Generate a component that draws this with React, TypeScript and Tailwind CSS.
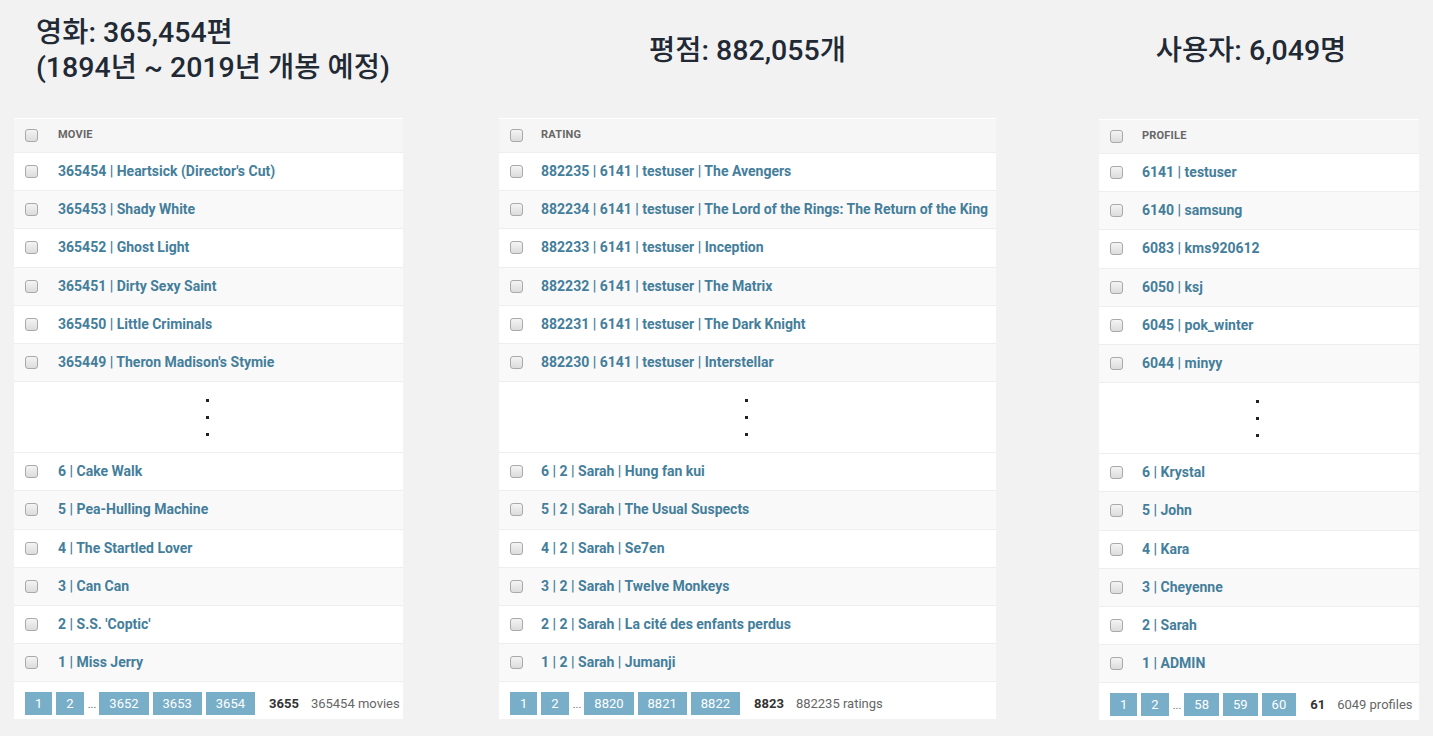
import React from "react";

type Panel = {
  header: string;
  top: string[];
  bottom: string[];
  pages: string[];
  current: string;
  total: string;
  textPad: string;
};

const movies: Panel = {
  header: "MOVIE",
  top: [
    "365454 | Heartsick (Director's Cut)",
    "365453 | Shady White",
    "365452 | Ghost Light",
    "365451 | Dirty Sexy Saint",
    "365450 | Little Criminals",
    "365449 | Theron Madison's Stymie",
  ],
  bottom: [
    "6 | Cake Walk",
    "5 | Pea-Hulling Machine",
    "4 | The Startled Lover",
    "3 | Can Can",
    "2 | S.S. 'Coptic'",
    "1 | Miss Jerry",
  ],
  pages: ["3652", "3653", "3654"],
  current: "3655",
  total: "365454 movies",
  textPad: "w-[44px]",
};

const ratings: Panel = {
  header: "RATING",
  top: [
    "882235 | 6141 | testuser | The Avengers",
    "882234 | 6141 | testuser | The Lord of the Rings: The Return of the King",
    "882233 | 6141 | testuser | Inception",
    "882232 | 6141 | testuser | The Matrix",
    "882231 | 6141 | testuser | The Dark Knight",
    "882230 | 6141 | testuser | Interstellar",
  ],
  bottom: [
    "6 | 2 | Sarah | Hung fan kui",
    "5 | 2 | Sarah | The Usual Suspects",
    "4 | 2 | Sarah | Se7en",
    "3 | 2 | Sarah | Twelve Monkeys",
    "2 | 2 | Sarah | La cité des enfants perdus",
    "1 | 2 | Sarah | Jumanji",
  ],
  pages: ["8820", "8821", "8822"],
  current: "8823",
  total: "882235 ratings",
  textPad: "w-[42px]",
};

const profiles: Panel = {
  header: "PROFILE",
  top: [
    "6141 | testuser",
    "6140 | samsung",
    "6083 | kms920612",
    "6050 | ksj",
    "6045 | pok_winter",
    "6044 | minyy",
  ],
  bottom: [
    "6 | Krystal",
    "5 | John",
    "4 | Kara",
    "3 | Cheyenne",
    "2 | Sarah",
    "1 | ADMIN",
  ],
  pages: ["58", "59", "60"],
  current: "61",
  total: "6049 profiles",
  textPad: "w-[43px]",
};

function Check() {
  return (
    <span className="inline-block w-[13px] h-[13px] rounded-[3px] border border-[#a9a9a9] bg-gradient-to-b from-[#f4f4f4] to-[#dcdcdc] shrink-0" />
  );
}

function Row({ text, odd, pad }: { text: string; odd: boolean; pad: string }) {
  return (
    <div
      className={`flex items-center h-[38.2px] border-b border-[#eeeeee] ${
        odd ? "bg-[#f9f9f9]" : "bg-white"
      }`}
    >
      <div className={`${pad} pl-[11px] flex items-center`}>
        <Check />
      </div>
      <span className="text-[14px] font-bold text-[#447e9b] whitespace-nowrap">{text}</span>
    </div>
  );
}

function Table({ p }: { p: Panel }) {
  return (
    <div className="bg-white pt-px">
      <div className="flex items-center h-[34px] bg-[#f6f6f6] border-b border-[#eeeeee]">
        <div className={`${p.textPad} pl-[11px] flex items-center`}>
          <Check />
        </div>
        <span className="text-[11px] font-bold text-[#666666] tracking-[0.2px]">{p.header}</span>
      </div>
      {p.top.map((t, i) => (
        <Row key={t} text={t} odd={i % 2 === 1} pad={p.textPad} />
      ))}
      <div className="h-[71px] bg-white border-b border-[#eeeeee] flex flex-col items-center justify-center gap-[14px] pr-[3px]">
        <span className="w-[3px] h-[3px] bg-[#222]" />
        <span className="w-[3px] h-[3px] bg-[#222]" />
        <span className="w-[3px] h-[3px] bg-[#222]" />
      </div>
      {p.bottom.map((t, i) => (
        <Row key={t} text={t} odd={i % 2 === 1} pad={p.textPad} />
      ))}
      <div className="h-[37px] flex items-end pb-[4px] pl-[11px] text-[13px]">
        <div className="flex items-center h-[23px]">
          <PageBtn n="1" />
          <PageBtn n="2" />
          <span className="text-[#666] mr-[3px] text-[11px] self-end mb-[2px]">...</span>
          {p.pages.map((n) => (
            <PageBtn key={n} n={n} />
          ))}
          <span className="ml-[10px] font-bold text-[#333] mr-[12px]">{p.current}</span>
          <span className="text-[#666] whitespace-nowrap">{p.total}</span>
        </div>
      </div>
    </div>
  );
}

function PageBtn({ n }: { n: string }) {
  return (
    <span className="h-[23px] px-[10px] mr-[4px] bg-[#79aec8] text-white flex items-center">{n}</span>
  );
}

export default function App() {
  return (
    <div
      className="min-h-[736px] w-[1433px] bg-[#f2f2f2] pl-[14px]"
      style={{ fontFamily: 'Roboto, "Noto Sans CJK KR", sans-serif' }}
    >
      <div className="flex">
        <div className="w-[389px]">
          <div className="h-[118px] pb-[18px] flex items-center pl-[22px]">
            <h1 className="text-[28.5px] leading-[35px] text-[#212934] font-medium whitespace-nowrap">
              영화: 365,454편
              <br />
              (1894년 ~ 2019년 개봉 예정)
            </h1>
          </div>
          <Table p={movies} />
        </div>
        <div className="w-[497px] ml-[96px]">
          <div className="h-[118px] pb-[18px] flex items-center justify-center">
            <h1 className="text-[28.5px] leading-[35px] text-[#212934] font-medium">평점: 882,055개</h1>
          </div>
          <Table p={ratings} />
        </div>
        <div className="w-[320px] ml-[103px]">
          <div className="h-[119px] pb-[19px] flex items-center justify-center pr-[16px]">
            <h1 className="text-[28.5px] leading-[35px] text-[#212934] font-medium">사용자: 6,049명</h1>
          </div>
          <Table p={profiles} />
        </div>
      </div>
    </div>
  );
}
